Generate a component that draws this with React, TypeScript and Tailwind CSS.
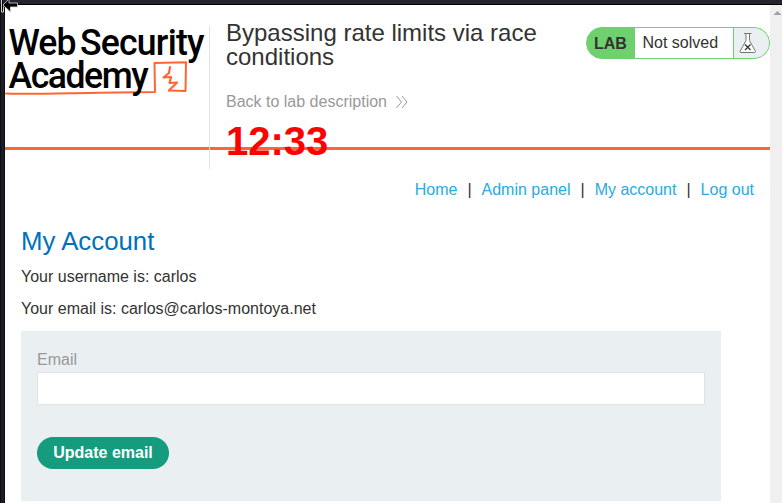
import type { ReactNode } from 'react';

function Logo() {
  return (
    <svg width="204" height="100" viewBox="5 5 204 100" className="block shrink-0 overflow-visible">
      <g fontFamily="Roboto, sans-serif" fontSize="37.500" fontWeight="500" fill="#000">
        <text transform="translate(8.500 55.300) scale(.95 1)" textLength="71.500" lengthAdjust="spacing">Web</text>
        <text transform="translate(80 55.300) scale(.95 1)" textLength="131" lengthAdjust="spacing">Security</text>
      </g>
      <g fill="none" stroke="#ff6633" strokeLinejoin="round" strokeLinecap="round">
        <path d="M6 93.500 C50 95 100 92 155 92 L154.500 63 L186 62.300 L185.500 91 L169 90.500" strokeWidth="2" />
        <path d="M170 67 L169 73 L163.500 77.500 L171 77 L169.500 83 L177 82.500 L169 90.500" strokeWidth="2.200" />
      </g>
      <text transform="translate(8.500 88.300) scale(.95 1)" fontFamily="Roboto, sans-serif" fontSize="37.500" fontWeight="500" textLength="147.500" lengthAdjust="spacing">Academy</text>
    </svg>
  );
}

function NavLink({ children }: { children: ReactNode }) {
  return <a href="#" className="text-[#29aae1]">{children}</a>;
}

function Status() {
  return (
    <div className="mt-[22px] flex h-8 w-[184px] shrink-0 overflow-hidden rounded-full border border-[#6fd16d] bg-[#6fd16d]">
      <span className="w-12 pl-[7px] font-bold leading-[31px]">LAB</span>
      <span className="w-[98px] bg-white pl-[7.500px] leading-[30px]">Not solved</span>
      <span className="ml-px flex-1 bg-[#eaeff2]">
        <svg width="30" height="30" viewBox="0 0 30 30" fill="none" stroke="#777">
          <path fill="#fff" d="M12 5.500v7L6 23.500q0 1 1 1h13.500q1 0 1-1L15.500 12.500v-7" />
          <path d="M10 5.500h7.500" />
          <path d="M11 16.500l5.500 5.500m0-5.500l-5.500 5.500" stroke="#333" strokeWidth="1.300" />
        </svg>
      </span>
    </div>
  );
}

export default function App() {
  return (
    <div className="relative flex h-[503px] w-[782px] flex-col overflow-hidden bg-[#20212b] font-['Liberation_Sans',Arial,sans-serif] text-base text-[#333332]">
      <div className="h-[5px] shrink-0 border-b border-black bg-[#23242e]" />
      <div className="flex min-h-0 flex-1">
        <div className="w-[5px] shrink-0 border-x border-[#0c0c12] bg-[#1d1d27]" />
        <main className="w-[765px] bg-white">
          <header className="flex h-[145px] border-b-[3px] border-[#ff6633]">
            <Logo />
            <div className="mt-[21px] h-[143px] w-px shrink-0 bg-[#e3e3e3]" />
            <div className="ml-4 w-[360px] shrink-0 pt-4">
              <h1 className="w-[340px] text-2xl leading-6">Bypassing rate limits via race conditions</h1>
              <a href="#" className="mt-[21px] flex h-6 items-center text-[#999]">
                Back to lab description
                <svg width="14" height="14" viewBox="0 0 14 14" fill="none" stroke="#999" className="ml-2">
                  <path d="M1.500 1l5 6-5 6M7 1l5 6-5 6" />
                </svg>
              </a>
              <p className="relative mt-1 text-[40px] font-bold leading-[46px] text-[#f00]">12:33</p>
            </div>
            <Status />
          </header>
          <nav className="flex h-[78px] justify-end pr-4 pt-[30px] leading-5">
            <NavLink>Home</NavLink><span className="mx-[10px]">|</span>
            <NavLink>Admin panel</NavLink><span className="mx-[10px]">|</span>
            <NavLink>My account</NavLink><span className="mx-[10px]">|</span>
            <NavLink>Log out</NavLink>
          </nav>
          <section className="pl-4">
            <h2 className="h-[37px] text-[25.800px] leading-[26px] text-[#0071bc]">My Account</h2>
            <p className="h-8 leading-6">Your username is: carlos</p>
            <p className="h-[34px] leading-6">Your email is: carlos@carlos-montoya.net</p>
            <form className="h-[170px] w-[700px] bg-[#eaeff2] px-4 pt-4">
              <label htmlFor="email" className="block h-[25px] leading-[26px] text-[#999]">Email</label>
              <input id="email" className="block h-[33px] w-full border border-[#e3e3e3] bg-white px-2 outline-none" />
              <button type="button" className="mt-8 h-8 w-[132px] rounded-full bg-[#159b7e] pb-px text-center font-bold text-white">Update email</button>
            </form>
          </section>
        </main>
        <aside className="flex w-3 shrink-0 justify-center bg-[#f0f0f0]">
          <svg width="12" height="16" viewBox="0 0 12 16"><path d="M3.500 10h8L7.500 6z" fill="#a0a0a0" /></svg>
        </aside>
      </div>
      <svg width="20" height="16" viewBox="0 0 20 16" className="absolute left-0 top-0">
        <path d="M1.500 0v12h2V6.500" fill="#000" stroke="#fff" strokeWidth=".8" />
        <path d="M3 5L9 -1V3h8.500v4H10.500v5z" fill="#000" stroke="#ddd" strokeWidth=".8" />
        <path d="M2.500 0v11" stroke="#000" />
      </svg>
    </div>
  );
}
